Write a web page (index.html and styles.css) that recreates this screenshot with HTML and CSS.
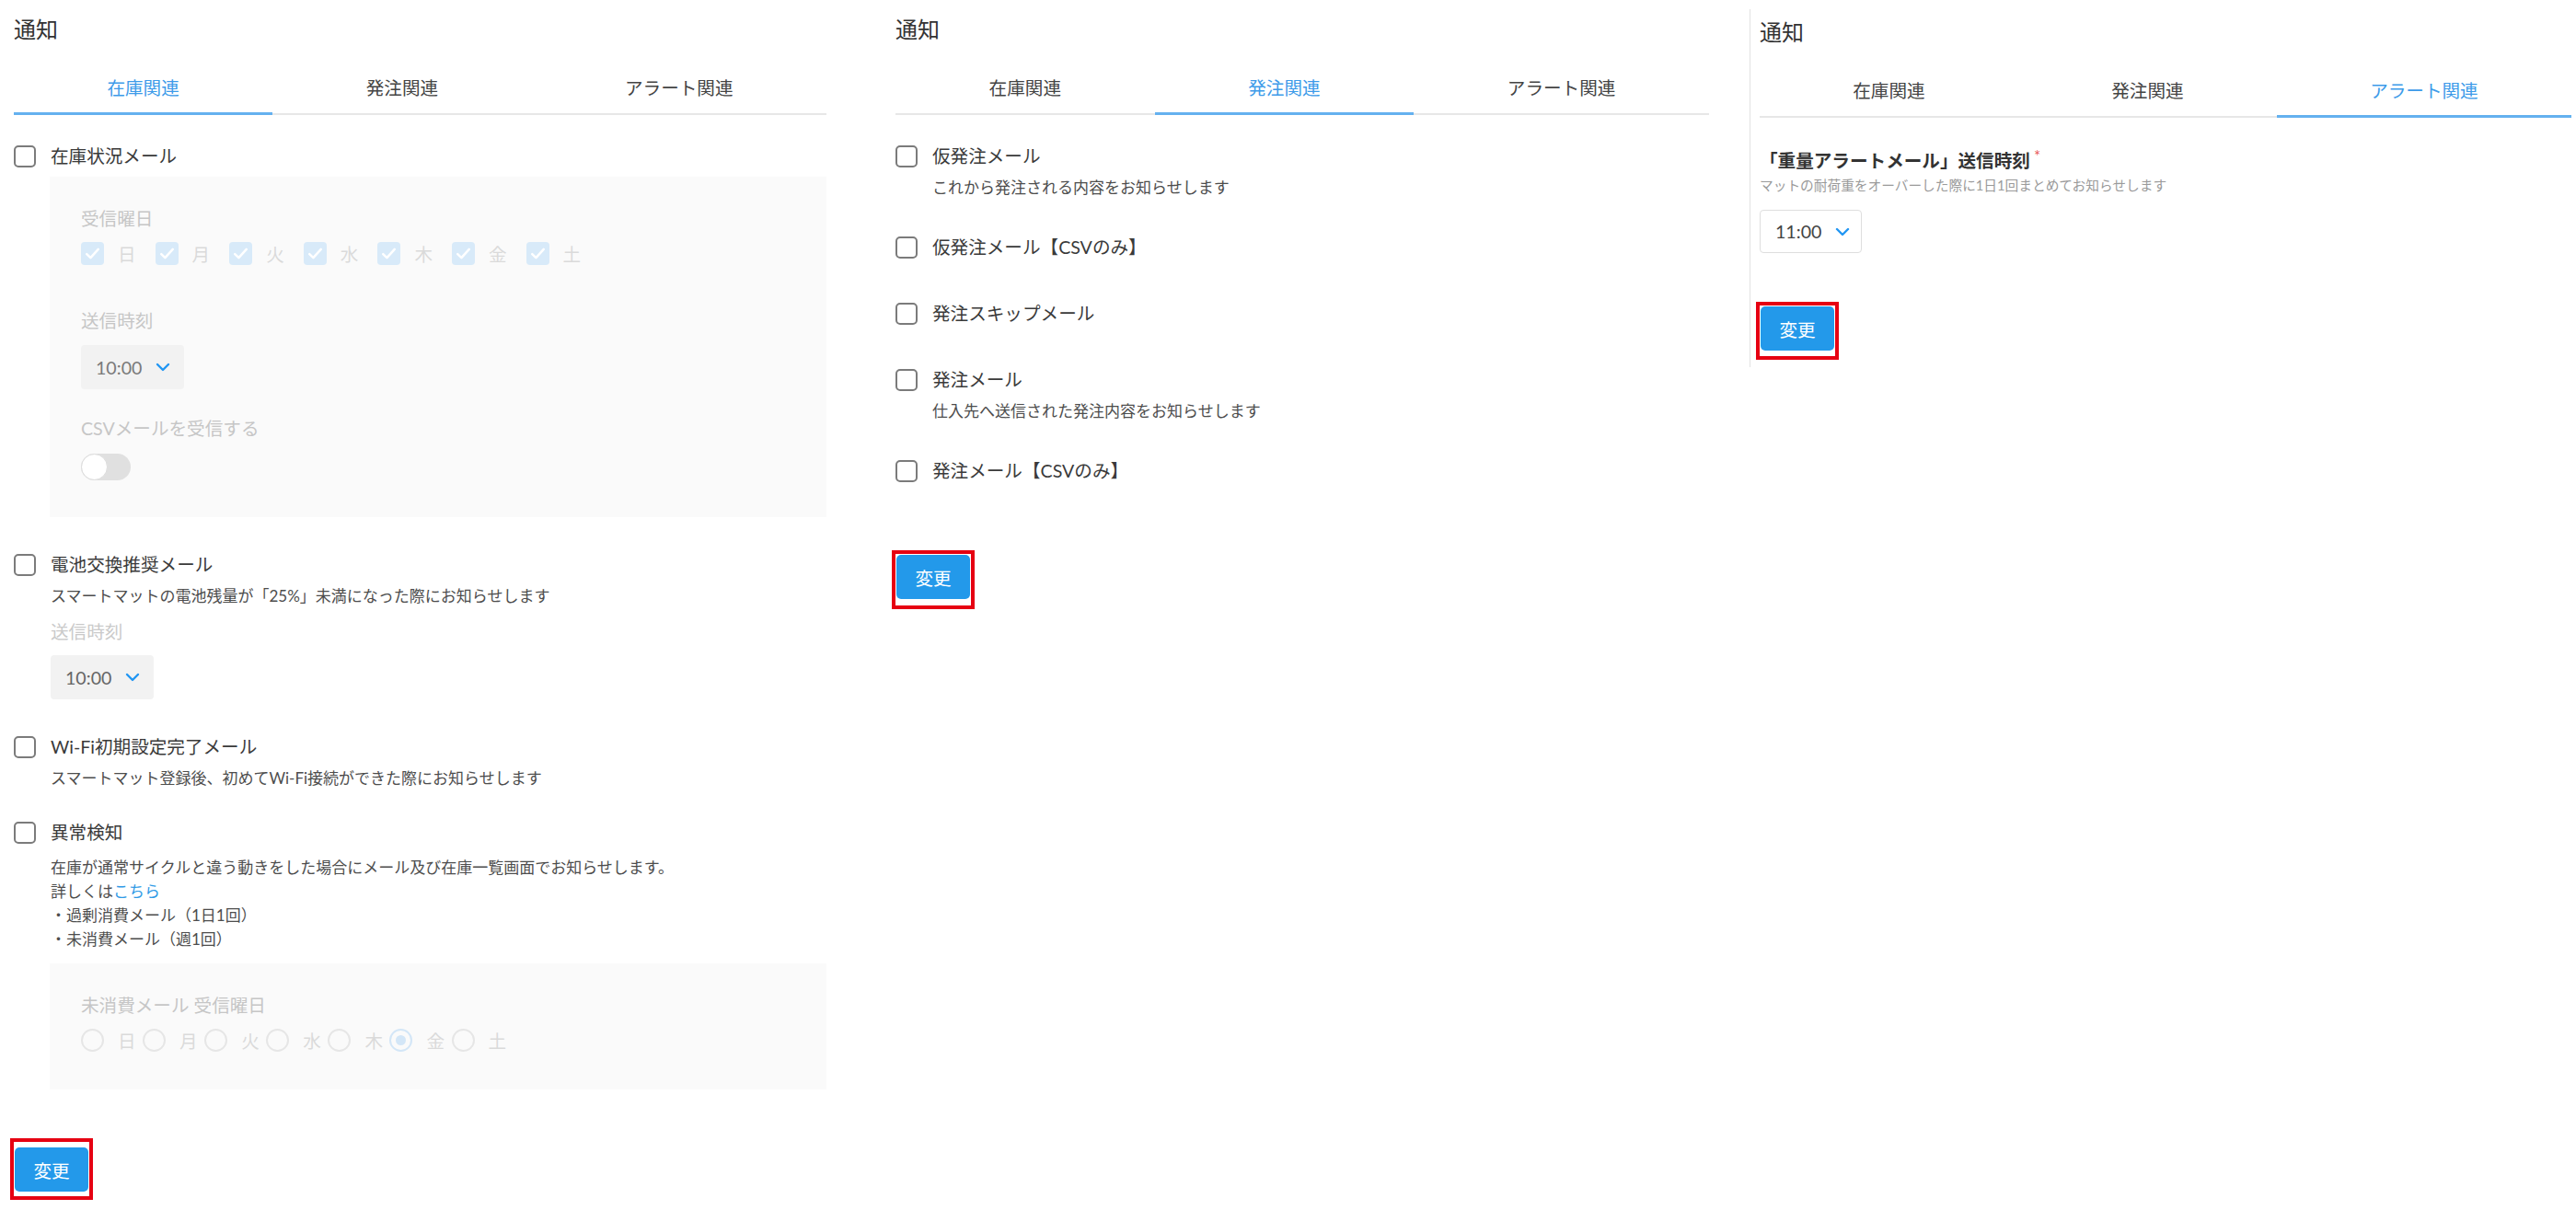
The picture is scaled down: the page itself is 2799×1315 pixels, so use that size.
FILE: index.html
```html
<!DOCTYPE html>
<html lang="ja">
<head>
    <meta charset="UTF-8">
    <title>通知設定</title>
    <link rel="stylesheet" href="styles.css">
</head>
<body>
<div class="screens">

    <!-- 在庫関連 -->
    <section class="panel panel-stock">
        <h1 class="title">通知</h1>
        <div class="tabs">
            <div class="tab active">在庫関連</div>
            <div class="tab">発注関連</div>
            <div class="tab">アラート関連</div>
        </div>

        <div class="items">
            <div class="item">
                <div class="check-row"><span class="box"></span>在庫状況メール</div>
                <div class="disabled-box">
                    <div class="field-label">受信曜日</div>
                    <div class="days">
                        <span class="day"><span class="day-box"><svg viewBox="0 0 24 24"><path d="M6 12.5l4 4 8-9"/></svg></span>日</span>
                        <span class="day"><span class="day-box"><svg viewBox="0 0 24 24"><path d="M6 12.5l4 4 8-9"/></svg></span>月</span>
                        <span class="day"><span class="day-box"><svg viewBox="0 0 24 24"><path d="M6 12.5l4 4 8-9"/></svg></span>火</span>
                        <span class="day"><span class="day-box"><svg viewBox="0 0 24 24"><path d="M6 12.5l4 4 8-9"/></svg></span>水</span>
                        <span class="day"><span class="day-box"><svg viewBox="0 0 24 24"><path d="M6 12.5l4 4 8-9"/></svg></span>木</span>
                        <span class="day"><span class="day-box"><svg viewBox="0 0 24 24"><path d="M6 12.5l4 4 8-9"/></svg></span>金</span>
                        <span class="day"><span class="day-box"><svg viewBox="0 0 24 24"><path d="M6 12.5l4 4 8-9"/></svg></span>土</span>
                    </div>
                    <div class="field-label gap-lg">送信時刻</div>
                    <div class="select muted">10:00<svg class="chev" viewBox="0 0 16 10"><path d="M2 2l6 6 6-6"/></svg></div>
                    <div class="field-label gap-md">CSVメールを受信する</div>
                    <div class="toggle"><span class="knob"></span></div>
                </div>
            </div>

            <div class="item">
                <div class="check-row"><span class="box"></span>電池交換推奨メール</div>
                <div class="desc indent">スマートマットの電池残量が「25%」未満になった際にお知らせします</div>
                <div class="field-label indent time-label">送信時刻</div>
                <div class="indent"><div class="select">10:00<svg class="chev" viewBox="0 0 16 10"><path d="M2 2l6 6 6-6"/></svg></div></div>
            </div>

            <div class="item">
                <div class="check-row"><span class="box"></span>Wi-Fi初期設定完了メール</div>
                <div class="desc indent">スマートマット登録後、初めてWi-Fi接続ができた際にお知らせします</div>
            </div>

            <div class="item">
                <div class="check-row"><span class="box"></span>異常検知</div>
                <div class="desc indent multi">
                    在庫が通常サイクルと違う動きをした場合にメール及び在庫一覧画面でお知らせします。<br>
                    詳しくは<a class="link" href="#">こちら</a><br>
                    ・過剰消費メール（1日1回）<br>
                    ・未消費メール（週1回）
                </div>
                <div class="disabled-box radios-box">
                    <div class="field-label">未消費メール 受信曜日</div>
                    <div class="days">
                        <span class="radio-item"><span class="radio"></span>日</span>
                        <span class="radio-item"><span class="radio"></span>月</span>
                        <span class="radio-item"><span class="radio"></span>火</span>
                        <span class="radio-item"><span class="radio"></span>水</span>
                        <span class="radio-item"><span class="radio"></span>木</span>
                        <span class="radio-item"><span class="radio on"></span>金</span>
                        <span class="radio-item"><span class="radio"></span>土</span>
                    </div>
                </div>
            </div>
        </div>

        <div class="mark mark-stock"><button type="button" class="btn">変更</button></div>
    </section>

    <!-- 発注関連 -->
    <section class="panel panel-order">
        <h1 class="title">通知</h1>
        <div class="tabs">
            <div class="tab">在庫関連</div>
            <div class="tab active">発注関連</div>
            <div class="tab">アラート関連</div>
        </div>

        <div class="items items-order">
            <div class="item">
                <div class="check-row"><span class="box"></span>仮発注メール</div>
                <div class="desc indent">これから発注される内容をお知らせします</div>
            </div>
            <div class="item">
                <div class="check-row"><span class="box"></span>仮発注メール【CSVのみ】</div>
            </div>
            <div class="item">
                <div class="check-row"><span class="box"></span>発注スキップメール</div>
            </div>
            <div class="item">
                <div class="check-row"><span class="box"></span>発注メール</div>
                <div class="desc indent">仕入先へ送信された発注内容をお知らせします</div>
            </div>
            <div class="item">
                <div class="check-row"><span class="box"></span>発注メール【CSVのみ】</div>
            </div>
        </div>

        <div class="mark mark-order"><button type="button" class="btn">変更</button></div>
    </section>

    <!-- アラート関連 -->
    <section class="panel panel-alert">
        <h1 class="title">通知</h1>
        <div class="tabs">
            <div class="tab">在庫関連</div>
            <div class="tab">発注関連</div>
            <div class="tab active">アラート関連</div>
        </div>

        <div class="alert-heading">「重量アラートメール」送信時刻<span class="req">*</span></div>
        <div class="alert-desc">マットの耐荷重をオーバーした際に1日1回まとめてお知らせします</div>
        <div class="select outlined">11:00<svg class="chev" viewBox="0 0 16 10"><path d="M2 2l6 6 6-6"/></svg></div>

        <div class="mark mark-alert"><button type="button" class="btn">変更</button></div>
    </section>

</div>
</body>
</html>
```

FILE: styles.css
```css
body {
    margin: 0;
    font-family: Lato, "Noto Sans CJK JP", sans-serif;
    color: #3a3a3a;
    background: #fff;
}
.screens {
    display: flex;
    align-items: flex-start;
}
.panel {
    width: 883px;
    padding-top: 15px;
}
.panel-stock {
    margin-left: 15px;
}
.panel-order {
    width: 884px;
    margin-left: 75px;
}
.panel-alert {
    width: 882px;
    margin-left: 44px;
    margin-top: 10px;
    padding: 8px 5px 8px 10px;
    border-left: 1px solid #e2e2e2;
}
.title {
    margin: 0;
    font-size: 24px;
    line-height: 34px;
    font-weight: 400;
    color: #333;
}
/* tabs */
.tabs {
    display: flex;
    margin-top: 21px;
    border-bottom: 2px solid #e7e7e7;
}
.tab {
    flex: 1 1 auto;
    text-align: center;
    font-size: 19.6px;
    line-height: 28px;
    padding: 12px 0;
    margin-bottom: -2px;
    border-bottom: 3px solid transparent;
    color: #444;
}
.tab.active {
    color: #3d9be9;
    border-bottom-color: #64b1ef;
}
/* checkbox items */
.items {
    display: flex;
    flex-direction: column;
    gap: 38px;
    padding-top: 31px;
}
.items-order {
    gap: 44px;
}
.check-row {
    display: flex;
    align-items: center;
    gap: 16px;
    font-size: 19.6px;
    line-height: 28px;
    color: #3a3a3a;
}
.box {
    width: 24px;
    height: 24px;
    box-sizing: border-box;
    border: 2px solid #7b7b7b;
    border-radius: 5px;
}
.indent {
    margin-left: 40px;
}
.desc {
    margin-top: 7px;
    margin-bottom: -5px;
    font-size: 17px;
    line-height: 25px;
    color: #4d4d4d;
}
.desc.multi {
    margin-top: 11px;
    line-height: 26px;
}
.link {
    color: #2f9ae6;
    text-decoration: none;
}
/* disabled settings box */
.disabled-box {
    margin: 8px 0 0 39px;
    padding: 32px 34px 40px;
    background: #fafafa;
}
.radios-box {
    margin-top: 18px;
}
.field-label {
    font-size: 19.6px;
    line-height: 28px;
    color: #c6c6c6;
}
.gap-lg {
    margin-top: 46px;
}
.gap-md {
    margin-top: 29px;
}
.time-label {
    margin-top: 18px;
    color: #cacaca;
}
.days {
    display: flex;
    align-items: center;
    height: 28px;
    margin-top: 9px;
    font-size: 19.6px;
    color: #dadada;
}
.day {
    display: flex;
    align-items: center;
    gap: 15px;
    margin-right: 21px;
}
.day-box {
    width: 25px;
    height: 25px;
    border-radius: 4px;
    background: #d8eaf9;
}
.day-box svg {
    display: block;
    width: 25px;
    height: 25px;
    fill: none;
    stroke: #fff;
    stroke-width: 2.4;
    stroke-linecap: round;
    stroke-linejoin: round;
}
.radio-item {
    display: flex;
    align-items: center;
    gap: 15px;
    margin-right: 7.5px;
}
.radio {
    display: flex;
    align-items: center;
    justify-content: center;
    width: 25px;
    height: 25px;
    box-sizing: border-box;
    border: 2px solid #e6e6e6;
    border-radius: 50%;
}
.radio.on {
    border-color: #d3e6f7;
}
.radio.on::after {
    content: "";
    width: 11px;
    height: 11px;
    border-radius: 50%;
    background: #d3e6f7;
}
/* select */
.select {
    display: flex;
    align-items: center;
    gap: 15px;
    width: 112px;
    height: 48px;
    box-sizing: border-box;
    margin-top: 12px;
    padding-left: 16px;
    background: #f2f2f2;
    border-radius: 4px;
    font-size: 19.6px;
    color: #666;
}
.select.muted {
    color: #7a7a7a;
}
.indent .select {
    margin-top: 11px;
}
.select.outlined {
    width: 111px;
    height: 47px;
    margin-top: 17px;
    background: #fff;
    border: 1.5px solid #dedede;
    color: #444;
}
.chev {
    width: 16px;
    height: 10px;
    fill: none;
    stroke: #2196f3;
    stroke-width: 2.4;
    stroke-linecap: round;
    stroke-linejoin: round;
}
/* toggle */
.toggle {
    display: flex;
    width: 54px;
    height: 29px;
    margin-top: 13px;
    border-radius: 15px;
    background: #e0e0e0;
}
.knob {
    width: 29px;
    height: 29px;
    box-sizing: border-box;
    border-radius: 50%;
    background: #fff;
    border: 1px solid #dcdcdc;
}
/* alert tab */
.alert-heading {
    margin-top: 33px;
    font-size: 19.6px;
    line-height: 28px;
    font-weight: 700;
    color: #333;
}
.req {
    color: #e85a5a;
    font-size: 17px;
    line-height: 17px;
    font-weight: 400;
    vertical-align: top;
    margin-left: 4px;
}
.alert-desc {
    margin-top: 2px;
    font-size: 14.7px;
    line-height: 20px;
    color: #9a9a9a;
}
/* submit button with red marker */
.mark {
    display: inline-block;
    margin-left: -4px;
    padding: 1px 1px 6px 1px;
    border: 4px solid #e60012;
}
.mark-stock {
    margin-top: 53px;
    padding-top: 6px;
    padding-bottom: 5px;
}
.mark-order {
    margin-top: 72px;
    padding-bottom: 7px;
}
.mark-alert {
    margin-top: 53px;
}
.btn {
    display: block;
    width: 80px;
    height: 48px;
    border: none;
    border-radius: 5px;
    background: #2399ea;
    color: #fff;
    font-family: inherit;
    font-size: 19.6px;
    cursor: pointer;
}
```
